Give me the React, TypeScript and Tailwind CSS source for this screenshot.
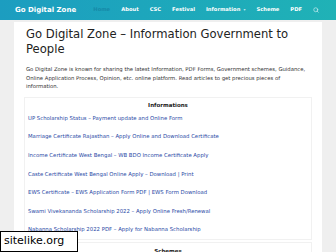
import { Search } from 'lucide-react';

const navItems = ['About', 'CSC', 'Festival', 'Information', 'Scheme', 'PDF'];

const infoLinks = [
  'UP Scholarship Status – Payment update and Online Form',
  'Marriage Certificate Rajasthan – Apply Online and Download Certificate',
  'Income Certificate West Bengal – WB BDO Income Certificate Apply',
  'Caste Certificate West Bengal Online Apply – Download | Print',
  'EWS Certificate – EWS Application Form PDF | EWS Form Download',
  'Swami Vivekananda Scholarship 2022 – Apply Online Fresh/Renewal',
  'Nabanna Scholarship 2022 PDF – Apply for Nabanna Scholarship'
];

const App = () => {
  return (
    <div className="relative w-[336px] h-[252px] overflow-hidden bg-[#efefef] font-['DejaVu_Sans',sans-serif]">
      {/* top nav */}
      <div className="flex items-center h-[20px] pl-[15px] pr-[17px] bg-gradient-to-r from-[#1c9dc0] to-[#20b2b6]">
        <p className="text-[7px] font-bold text-white">Go Digital Zone</p>
        <div className="flex items-center gap-[11px] ml-auto">
          <span className="text-[5.2px] font-bold text-[#168aa8]">Home</span>
          {navItems.map((item) => (
            <span key={item} className="flex items-center text-[5.2px] font-bold text-white">
              {item}
              {item === 'Information' &&
                <span className="ml-[3px] text-[4px] text-[#bfe9f0]">▾</span>
              }
            </span>
          ))}
          <Search className="w-[6px] h-[6px] text-[#d5f1f4]" strokeWidth={2.5} />
        </div>
      </div>

      {/* content card */}
      <div className="mt-[2px] mx-[14px] bg-white px-[12px] pt-[5px] h-[240px]">
        <h1 className="text-[11.6px] leading-[15px] text-[#222]">Go Digital Zone – Information Government to People</h1>
        <p className="mt-[8px] text-[5.3px] leading-[8.5px] text-[#333]">
          Go Digital Zone is known for sharing the latest Information, PDF Forms, Government schemes, Guidance, Online Application Process, Opinion, etc. online platform. Read articles to get precious pieces of information.
        </p>

        <div className="mt-[6px] -mx-[2px] border border-[#f1f1f1]">
          <p className="pt-[4px] text-center text-[5.5px] leading-[7px] font-bold text-[#222]">Informations</p>
          <div className="flex flex-col">
            {infoLinks.map((link) => (
              <a key={link} className="flex items-center h-[18.6px] px-[3px] text-[5.35px] text-[#2a4aa6]">{link}</a>
            ))}
          </div>
        </div>

        <div className="mt-[2px] -mx-[2px] border border-[#f1f1f1]">
          <p className="pt-[5px] text-center text-[5.5px] leading-[7px] font-bold text-[#222]">Schemes</p>
        </div>
      </div>

      {/* watermark */}
      <div className="absolute left-0 bottom-0 w-[78px] h-[21px] border border-black bg-white flex items-center pl-[3px]">
        <span className="text-[11px] text-black">sitelike.org</span>
      </div>
    </div>
  );
};

export default App;
